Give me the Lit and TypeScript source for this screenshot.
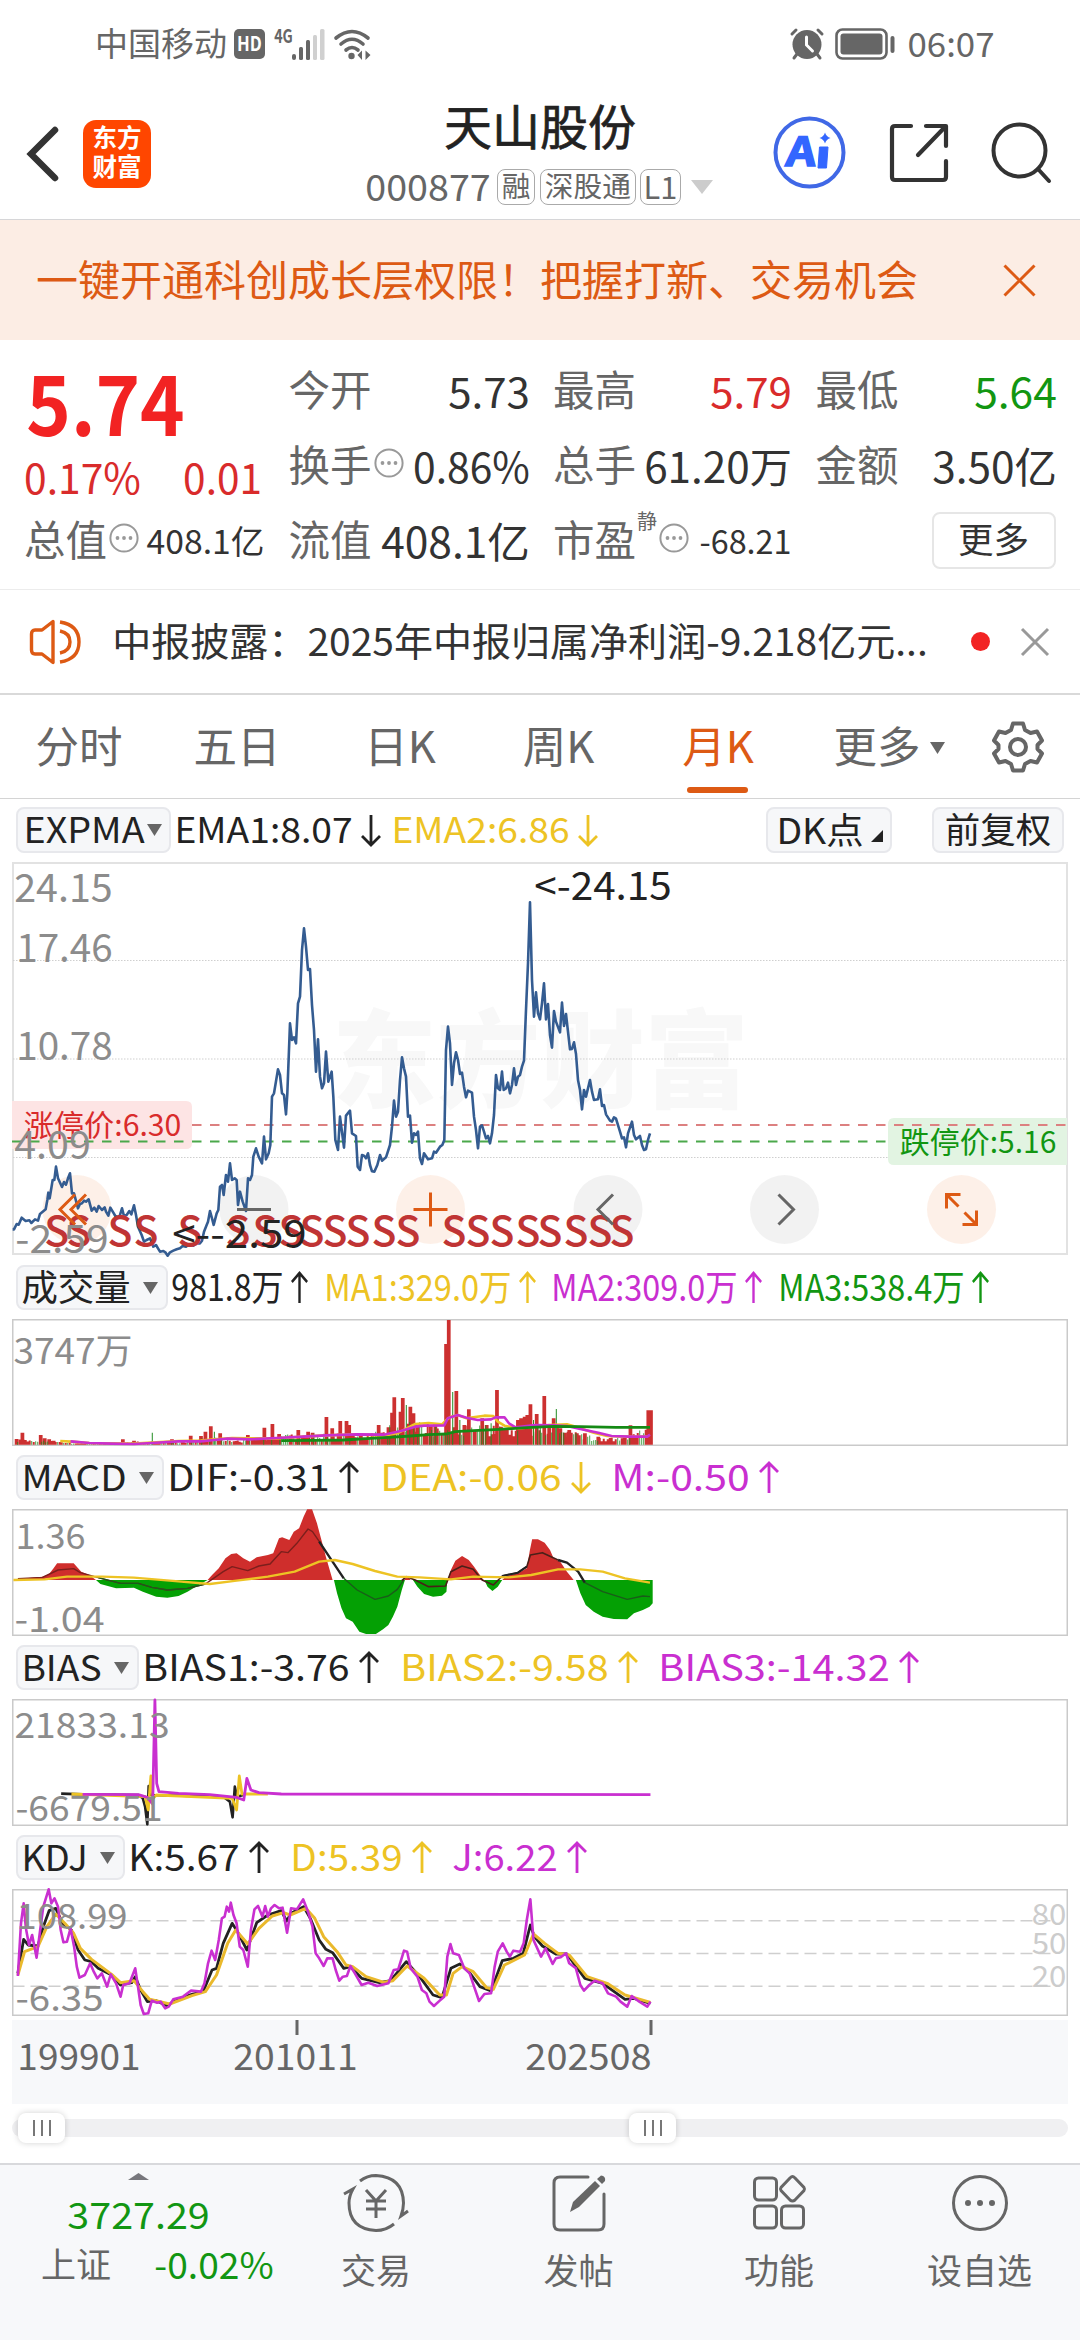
import { LitElement, html, svg, css } from "lit";
import { customElement } from "lit/decorators.js";

const INK = "#222222";
const BODY = "#333333";
const GRAY = "#666666";
const AXIS = "#8c8c8c";
const RED = "#d92b2b";
const GREEN = "#129612";
const YELLOW = "#edc324";
const PURPLE = "#c92fd0";
const ORANGE = "#dd5a14";

/** Text whose glyph run is fitted to a fixed width; the box is as tall as the digits. */
const fit = (text: string, w: number, size: number, color: string, weight = 400) => {
  const h = Math.round(size * 0.75);
  const pad = size * 0.045;
  return html`<svg class="fit" width=${w} height=${h}>
    <text x=${-pad} y=${h - 0.5} font-size=${size} fill=${color} font-weight=${weight}
      textLength=${w + pad * 2} lengthAdjust="spacingAndGlyphs">${text}</text></svg>`;
};

/** The same fitting for a label inside a chart: x is the left edge, y the baseline. */
const mark = (text: string, x: number, y: number, w: number, size: number, color = AXIS, weight = 400) => svg`
  <text x=${x - size * 0.045} y=${y} font-size=${size} fill=${color} font-weight=${weight}
    textLength=${w + size * 0.09} lengthAdjust="spacingAndGlyphs">${text}</text>`;

const line = (points: string, color: string, width = 2) => svg`
  <polyline points=${points} fill="none" stroke=${color} stroke-width=${width}
    stroke-linejoin="round" vector-effect="non-scaling-stroke"></polyline>`;

const arrow = (up: boolean, color: string) => html`<svg class="arrow" width="20" height="33" viewBox="0 0 20 33" preserveAspectRatio="none">
  <path d=${up ? "M10 32V2M1 11L10 2L19 11" : "M10 1V31M1 22L10 31L19 22"} fill="none" stroke=${color} stroke-width="2.8"></path></svg>`;

const more = html`<svg class="info" width="30" height="30" viewBox="0 0 30 30">
  <circle cx="15" cy="15" r="13.6" fill="none" stroke="#999" stroke-width="2"></circle>
  <circle cx="8.5" cy="15" r="1.9" fill="#999"></circle><circle cx="15" cy="15" r="1.9" fill="#999"></circle><circle cx="21.5" cy="15" r="1.9" fill="#999"></circle></svg>`;

const PRICE =
  "38,1138 42,1138 50,1122 56,1124 65,1103 77,1113 88,1111 94,1119 105,1108 114,1112 120,1092 137,1078 142,1050 145,1028 149,1045 158,990 163,990 168,950 174,985 186,1011 192,996 198,1004 204,985 210,970 216,1030 222,1030 234,1075 240,1062 246,1060 252,1052 258,1055 266,1048 275,1082 283,1073 290,1085 296,1068 306,1080 314,1072 318,1085 325,1097 331,1073 340,1088 346,1098 355,1102 360,1095 366,1075 372,1098 380,1095 388,1083 394,1093 402,1066 408,1095 414,1130 425,1155 432,1175 440,1170 450,1165 460,1190 468,1185 474,1195 480,1205 490,1203 497,1208 503,1217 510,1207 520,1202 530,1198 540,1195 548,1188 558,1190 566,1184 580,1187 590,1180 600,1180 606,1172 612,1145 620,1125 624,1115 630,1083 636,1105 641,1125 650,1090 655,1080 660,1010 666,1005 671,1035 678,975 684,995 690,940 696,990 704,985 710,990 714,1065 720,1025 728,1055 738,1083 744,985 750,990 756,975 760,920 768,895 776,920 786,940 792,860 798,928 806,910 811,885 816,740 822,730 834,658 840,675 846,730 852,735 858,793 862,730 870,520 876,570 882,562 888,580 894,460 900,440 906,300 912,235 918,290 924,360 930,357 936,465 942,540 948,665 954,568 960,680 966,715 972,700 978,605 985,695 995,665 1000,740 1006,870 1014,900 1020,800 1032,893 1038,797 1050,782 1056,850 1068,858 1073,950 1080,960 1086,915 1092,917 1098,925 1104,910 1110,945 1116,964 1123,965 1132,945 1140,915 1146,932 1158,922 1170,885 1176,830 1182,752 1188,800 1194,785 1200,690 1206,622 1212,655 1218,680 1224,800 1230,797 1236,878 1242,850 1248,855 1254,845 1260,925 1266,942 1272,910 1284,928 1296,925 1302,905 1308,908 1320,890 1327,885 1333,870 1338,600 1344,530 1350,580 1356,705 1362,640 1368,607 1374,630 1380,672 1386,668 1392,710 1398,742 1404,722 1416,728 1422,800 1428,840 1434,895 1440,830 1446,826 1452,845 1458,865 1464,858 1470,880 1476,850 1482,795 1488,675 1494,715 1500,720 1506,665 1511,720 1518,715 1524,698 1530,730 1536,705 1542,655 1548,705 1554,680 1560,675 1566,650 1572,632 1578,480 1584,340 1590,157 1596,390 1602,500 1608,427 1614,490 1620,508 1626,460 1632,400 1638,508 1644,462 1650,555 1656,593 1662,483 1668,515 1680,547 1686,458 1692,528 1698,492 1704,545 1710,598 1716,597 1722,577 1728,612 1734,690 1740,720 1746,778 1752,720 1758,740 1770,690 1776,725 1782,750 1794,748 1800,718 1806,768 1812,765 1818,793 1830,812 1836,815 1842,802 1848,806 1860,845 1866,865 1872,862 1878,892 1884,850 1896,815 1902,855 1908,868 1920,858 1926,885 1932,900 1938,898 1944,870 1950,850";

const SIGNALS = [45.7, 68, 109, 135, 179, 227, 254, 280, 301, 324, 347, 373, 397, 443, 467, 491, 517, 539, 565, 589, 611];

const VOLUME_PEAKS: [number, number, boolean?][] = [
  [37, 387], [50, 368], [91, 375], [100, 385], [110, 388], [120, 392], [275, 388], [300, 392], [341, 368, true], [385, 388], [427, 377], [450, 378], [460, 365], [472, 349], [480, 365, true], [493, 370], [555, 375], [592, 353], [610, 342], [625, 372], [640, 375, true], [668, 360], [690, 365], [700, 368], [731, 321], [744, 355], [762, 333], [776, 333], [782, 345], [848, 345], [870, 352], [878, 308], [883, 262], [897, 305], [902, 264], [910, 285, true], [919, 290], [926, 310], [935, 340], [965, 345], [975, 340], [999, 102], [1005, 30], [1014, 246, true], [1022, 243], [1030, 330, true], [1040, 345], [1050, 298], [1080, 325], [1090, 345], [1100, 340, true], [1113, 240], [1122, 350], [1135, 365], [1160, 330], [1167, 325], [1175, 320], [1181, 315], [1188, 283], [1195, 330, true], [1202, 312], [1210, 345, true], [1219, 258], [1230, 345], [1240, 325], [1246, 297, true], [1255, 355], [1265, 368], [1275, 360], [1290, 370, true], [1310, 370], [1340, 380], [1412, 346], [1452, 301], [1458, 301],
];
const VOLUME_BASE: [number, number][] = [
  [30, 14], [130, 10], [140, 6], [260, 3], [300, 9], [420, 9], [450, 24], [500, 22], [540, 12], [600, 22], [700, 30], [800, 34], [860, 42], [880, 56], [930, 62], [1000, 50], [1060, 56], [1130, 45], [1170, 62], [1240, 52], [1290, 30], [1350, 16], [1400, 26], [1445, 40],
];
const baseAt = (x: number) => {
  const i = Math.max(1, VOLUME_BASE.findIndex((p) => p[0] >= x));
  const [x0, h0] = VOLUME_BASE[i - 1];
  const [x1, h1] = VOLUME_BASE[i];
  return h0 + ((h1 - h0) * (x - x0)) / (x1 - x0);
};
const volumePaths = () => {
  let red = "";
  let green = "";
  let seed = 7;
  for (let x = 33; x < 1446; x += 4.48) {
    seed = (seed * 1103515245 + 12345) % 2147483648;
    const r = seed / 2147483648;
    const h = baseAt(x) * (0.45 + 0.75 * ((r * 7.3) % 1));
    if (r > 0.42) red += `M${x} 404v${-h}h4.48v${h}z`;
    else green += `M${x + 1.4} 404v${-h}h1.8v${h}z`;
  }
  for (const [x, top, down] of VOLUME_PEAKS) {
    if (down) green += `M${x - 1} 404V${top}h2.2V404z`;
    else red += `M${x - 4} 404V${top}h8.4V404z`;
  }
  return { red, green };
};

const MACD_RED =
  "M40 810L40 807L95 800L110 792L120 775L128 760H165L175 775L182 785L200 795L215 810Z M465 810L475 795L490 775L505 745L518 732L530 730L545 745L560 755L575 742L600 735L612 730L625 685L632 682L648 690L658 665L670 655L680 620L688 598H699L710 640L720 690L730 740L745 810Z M905 810L912 798L920 810Z M1003 810L1010 780L1020 752L1035 738L1050 750L1062 770L1075 795L1083 810Z M1125 810L1135 798L1160 790L1180 775L1187 720L1192 688H1205L1220 698L1232 720L1240 745L1255 755L1270 785L1285 810Z";
const MACD_GREEN =
  "M215 810L225 822L260 835L300 833L320 845L350 860L375 863L400 858L420 845L445 825L465 810Z M748 810L755 850L765 895L775 925L790 935L805 965L820 972H842L858 958L870 945L880 920L890 890L900 840L907 810Z M925 810L935 830L950 852L970 860L990 857L1000 845L1002 810Z M1085 810L1092 830L1103 843L1115 830L1125 810Z M1290 810L1300 850L1312 885L1330 905L1350 920L1375 927L1405 928L1420 910L1440 900L1455 890L1462 880V810Z";

const KDJ_J =
  "40,1008 47,850 53,790 58,865 65,915 72,885 82,953 90,870 97,800 109,748 115,790 122,775 130,800 136,870 142,907 150,905 158,865 166,920 172,980 178,1013 190,1005 202,970 210,995 218,1015 228,1000 240,1040 248,1003 260,1030 270,1070 276,1035 290,1030 303,985 308,1030 315,1095 322,1122 332,1120 340,1082 352,1088 360,1085 370,1105 378,1100 388,1078 410,1070 428,1052 450,1055 458,1030 466,970 474,932 482,960 490,900 497,835 503,830 508,800 513,815 517,788 523,825 530,850 537,920 545,930 555,980 562,870 570,808 578,798 588,830 594,798 600,830 607,805 615,795 625,805 633,803 643,878 652,805 665,808 679,778 690,815 700,860 707,940 715,955 725,978 733,955 745,955 752,990 760,1022 768,1010 777,1008 785,978 795,1000 810,1035 825,1028 845,1038 870,1030 882,990 892,988 905,932 912,935 920,985 935,1010 945,1050 955,1060 962,1085 972,1098 985,1082 995,1070 1002,950 1009,912 1015,940 1028,945 1040,985 1052,1000 1062,1040 1073,1083 1085,1062 1100,1060 1108,980 1115,935 1126,910 1135,935 1142,950 1150,932 1165,935 1173,910 1180,840 1188,778 1195,900 1212,950 1222,925 1238,972 1245,955 1256,952 1268,940 1275,970 1290,985 1300,1035 1308,1052 1320,1035 1332,1022 1350,1030 1362,1060 1380,1070 1390,1085 1405,1100 1415,1068 1432,1085 1450,1100 1457,1085";
const KDJ_K =
  "40,1000 53,898 63,915 85,918 97,860 110,812 125,805 140,850 160,870 175,930 190,960 205,965 220,985 250,1005 270,1035 295,1028 303,1010 315,1050 330,1085 350,1082 375,1098 390,1082 430,1063 455,1055 475,990 485,985 500,910 520,850 532,875 553,930 575,848 600,825 630,812 642,843 652,820 680,800 695,835 715,900 730,928 745,938 770,985 785,980 810,1015 850,1028 875,1022 910,965 940,1010 970,1065 990,1073 1010,985 1030,972 1050,995 1075,1040 1100,1053 1125,962 1150,955 1172,940 1188,855 1197,890 1215,918 1245,942 1270,942 1310,1015 1350,1030 1400,1078 1420,1075 1457,1090";
const KDJ_D =
  "40,1005 55,935 85,920 105,860 125,822 145,850 165,880 180,925 205,958 250,1003 270,1028 300,1022 320,1055 335,1078 380,1092 430,1067 460,1055 485,1005 510,910 528,870 555,912 580,865 610,828 635,818 650,825 685,805 705,835 725,890 755,935 775,975 790,980 820,1010 860,1027 880,1022 912,978 950,1015 985,1065 1000,1065 1015,1000 1035,980 1060,995 1090,1043 1105,1048 1130,975 1175,945 1195,882 1220,910 1250,940 1275,945 1315,1010 1360,1030 1400,1065 1457,1087";

type Value = [text: string, width: number, up: boolean, color: string];

@customElement("app-root")
export class AppRoot extends LitElement {
  static styles = css`
    :host { display: block; width: 1080px; height: 2340px; overflow: hidden; background: #fff; color: #333;
      font-family: "Noto Sans CJK SC", "Noto Sans", sans-serif; }
    * { box-sizing: border-box; }
    svg { display: block; flex: none; overflow: visible; }
    svg text { font-family: "Noto Sans CJK SC", "Noto Sans", sans-serif; white-space: pre; }
    .t { line-height: 1; margin-top: -0.11em; white-space: nowrap; }
    .row, .status, .header, .banner, .news, .legend, .sub { display: flex; align-items: center; }
    .grow { flex: 1; }

    .status { height: 88px; padding: 0 87px 0 95px; }
    .carrier { font-size: 33px; color: #666; margin-right: 7px; }
    .hd { width: 31px; height: 30px; border-radius: 5px; background: #666; display: flex; align-items: center; justify-content: center; margin: -1px 10px 0 0; }
    .sig { margin-right: 9px; }
    .alarm { margin-right: 11px; }
    .batt { margin-right: 14px; }

    .header { height: 132px; padding: 0 28px 0 26px; border-bottom: 1px solid #d6d6d8; position: relative; justify-content: space-between; }
    .left { display: flex; align-items: center; gap: 24px; height: 130px; }
    .logo { width: 68px; height: 68px; border-radius: 13px; background: #ff4600; color: #fff; font-weight: 700; font-size: 24.5px;
      display: flex; flex-direction: column; align-items: center; justify-content: center; gap: 5px; }
    .logo .t { margin-top: -4px; }
    .logo .t + .t { margin-top: 0; }
    .title { position: absolute; left: 0; right: 0; top: 16px; display: flex; flex-direction: column; align-items: center; gap: 20px; }
    .name { font-size: 48px; font-weight: 400; -webkit-text-stroke: 0.7px #222; color: #222; line-height: 50px; margin-top: -5px; }
    .sub { height: 36px; gap: 4.5px; }
    .tag { height: 36px; border: 1.5px solid #aaa; border-radius: 8px; display: flex; align-items: center; padding: 0 4px; font-size: 28.7px; color: #666; }
    .code { margin-right: 3px; }
    .caret { margin-left: 5px; }
    .tools { display: flex; align-items: center; gap: 43.5px; height: 130px; margin-top: -2px; }

    .banner { height: 120px; background: #fcede4; padding: 0 44px 0 36px; justify-content: space-between; font-size: 42px; color: #dd5a14; }

    .quote { height: 250px; border-bottom: 1px solid #ececec; padding: 14px 25px 0; display: grid; grid-template-columns: 238px 238px 236px 238px; column-gap: 26.5px; align-content: start; }
    .cell { height: 75px; display: flex; align-items: center; justify-content: space-between; font-size: 41.5px; color: #666; }
    .cell .row { gap: 2px; margin-left: -1px; }
    .info { margin-top: -8px; }
    .price { height: 101px; display: flex; align-items: center; padding-left: 5px; }
    .change { height: 49px; display: flex; align-items: center; justify-content: space-between; padding: 0 3px 4px 1px; }
    .sup { font-size: 20px; line-height: 1; align-self: flex-start; margin: -12px 0 0 -1px; }
    .more { width: 124px; height: 57px; border: 2px solid #e6e6e6; border-radius: 8px; display: flex; align-items: center; justify-content: center; font-size: 35.5px; color: #333; margin: -3px -1px 0 auto; }

    .news { height: 105px; border-bottom: 2px solid #d9d9d9; padding: 0 31px 0 29px; }
    .news .head { margin-left: 33px; }
    .dot { width: 19px; height: 19px; border-radius: 50%; background: #f22323; margin-right: 31px; }

    .tabs { height: 104px; border-bottom: 1px solid #d4d4d4; font-size: 43.5px; color: #666; display: grid; align-items: center; justify-items: center;
      grid-template-columns: 158px 158px 168px 149px 170px 172px 86px; }
    .tab { display: flex; flex-direction: column; align-items: center; padding-top: 2px; }
    .on { color: #dd5a14; position: relative; }
    .on::after { content: ""; position: absolute; bottom: -26px; width: 61px; height: 6px; border-radius: 3px; background: #dd5a14; }
    .pair { display: flex; align-items: center; gap: 9px; padding-top: 2px; }

    .legend { height: 63px; padding: 0 16px; }
    .legend.top { height: 62px; }
    .btn { height: 45px; border: 2px solid #e7e8ec; border-radius: 8px; background: #f6f7f9; display: flex; align-items: center; padding: 0 8px 0 5px; gap: 14px; margin-right: 5px; color: #222; }
    .top .btn { height: 46px; padding: 0 7px; gap: 4px; }
    .val { display: flex; align-items: center; gap: 11px; margin-right: 22.5px; }
    .tight .val { gap: 9px; margin-right: 17.5px; }
    .tight .arrow { width: 17px; }
    .top .val { gap: 10px; margin-right: 12px; }
    .top .flat { width: 132px; padding: 0; justify-content: center; margin: 0; font-size: 35.5px; }
    .top .dk { width: 126px; margin-right: 40px; gap: 9px; padding-left: 2px; }
    .plot { margin-left: 12px; }

    .axis { height: 84px; margin: 4px 12px 0; background: #f7f8fa; }
    .slider { height: 60px; padding: 0 12px; display: flex; align-items: center; position: relative; margin-top: -6px; }
    .track { width: 100%; height: 18px; border-radius: 9px; background: #f0f0f2; }
    .knob { position: absolute; top: 15px; width: 47px; height: 30px; border-radius: 8px; background: #fff; box-shadow: 0 0 6px rgba(0, 0, 0, 0.18);
      display: flex; align-items: center; justify-content: center; gap: 6px; }
    .knob i { width: 2px; height: 16px; background: #777; }
    .k1 { left: 18px; }
    .k2 { left: 629px; }

    .nav { height: 182px; background: #f7f8fa; border-top: 2px solid #d8d9dc; display: grid; grid-template-columns: 272px 208px 197px 204px 197px; margin-top: 5px; }
    .index { display: flex; flex-direction: column; align-items: center; padding: 8px 0 0 4px; }
    .index .fit { margin-top: 21px; }
    .index .row { gap: 45px; margin: -1px 0 0 37px; height: 73px; font-size: 35px; color: #666; align-self: flex-start; }
    .index .row .fit { margin-top: 0; }
    .item { display: flex; flex-direction: column; align-items: center; padding-top: 9px; font-size: 35px; color: #666; gap: 22px; }
    .item .t { margin: 0; margin-top: -3px; }
  `;

  private caret(w: number, h: number, color = GRAY) {
    return html`<svg width=${w} height=${h} viewBox="0 0 10 10" preserveAspectRatio="none"><path d="M0 0H10L5 10Z" fill=${color}></path></svg>`;
  }

  private values(list: Value[], size: number) {
    return list.map(([text, w, up, color]) => html`<div class="val">${fit(text, w, size, color)}${arrow(up, color)}</div>`);
  }

  private legend(name: string, w: number, list: Value[], tight = false) {
    return html`<div class="legend ${tight ? "tight" : ""}">
      <div class="btn">${fit(name, w, 36, INK)}${this.caret(15, 12)}</div>${this.values(list, 36.5)}
    </div>`;
  }

  private frame(content: unknown, offset: number, labels: unknown) {
    return html`<svg class="plot" width="1056" height="127" viewBox="0 0 1056 127">
      <rect x="0.75" y="0.75" width="1054.5" height="125.5" fill="none" stroke="#cacaca" stroke-width="1.5"></rect>
      <g transform="matrix(0.44643 0 0 0.33333 -12 ${offset})">${content}</g>${labels}
    </svg>`;
  }

  private renderStatus() {
    return html`<div class="status">
      <span class="t carrier">中国移动</span>
      <div class="hd">${fit("HD", 23, 20, "#fff", 700)}</div>
      <svg class="sig" width="50" height="31" viewBox="0 0 50 31">
        ${mark("4G", 0, 14, 17, 19, GRAY, 700)}
        <rect x="17" y="25" width="4" height="6" rx="2" fill="#666"></rect><rect x="24" y="18" width="4" height="13" rx="1.5" fill="#666"></rect>
        <rect x="31" y="11" width="4" height="20" rx="1.5" fill="#666"></rect><rect x="38" y="6" width="4" height="25" rx="1.5" fill="#d0d0d0"></rect>
        <rect x="45" y="0" width="4.5" height="31" rx="1.5" fill="#d0d0d0"></rect>
      </svg>
      <svg width="38" height="31" viewBox="0 0 38 31">
        <g fill="none" stroke="#666" stroke-width="3.6" stroke-linecap="round"><path d="M2 9Q18 -4 34 9"></path><path d="M7 15Q18 5.500 29 15"></path><path d="M12 21Q18 16 24 21"></path></g>
        <circle cx="17.500" cy="27" r="3.2" fill="#666"></circle>
        <path d="M23.500 26L28 21.500V31M28 26H23.500M36.500 26L31.500 31V21.500Z" fill="#666"></path>
      </svg>
      <div class="grow"></div>
      <svg class="alarm" width="34" height="32" viewBox="0 0 34 32">
        <circle cx="17" cy="16.500" r="14.500" fill="#666"></circle>
        <g stroke="#666" stroke-width="3" stroke-linecap="round"><path d="M2 6L6 2"></path><path d="M32 6L28 2"></path><path d="M7 26L4 30"></path><path d="M27 26L30 30"></path></g>
        <path d="M16.500 9V17L22.500 23" fill="none" stroke="#fff" stroke-width="3" stroke-linecap="round"></path>
      </svg>
      <svg class="batt" width="60" height="32" viewBox="0 0 60 32">
        <rect x="1.500" y="1.500" width="50" height="29" rx="6" fill="none" stroke="#666" stroke-width="2.600"></rect>
        <rect x="5.500" y="5.500" width="42" height="21" rx="3" fill="#666"></rect>
        <rect x="55.500" y="8" width="4" height="17" rx="2" fill="#666"></rect>
      </svg>
      ${fit("06:07", 84, 34, GRAY)}
    </div>`;
  }

  private renderHeader() {
    return html`<div class="header">
      <div class="left">
        <svg width="33" height="56" viewBox="0 0 33 56"><path d="M29 4L5 28L29 52" fill="none" stroke="#333" stroke-width="6.500" stroke-linecap="round" stroke-linejoin="miter"></path></svg>
        <div class="logo"><span class="t">东方</span><span class="t">财富</span></div>
      </div>
      <div class="title">
        <span class="name">天山股份</span>
        <div class="sub">
          <span class="code">${fit("000877", 122, 37, GRAY)}</span>
          <span class="tag"><span class="t">融</span></span>
          <span class="tag"><span class="t">深股通</span></span>
          <span class="tag">${fit("L1", 31, 31, GRAY)}</span>
          <span class="caret">${this.caret(22, 14, "#cccccc")}</span>
        </div>
      </div>
      <div class="tools">
        <svg width="73" height="73" viewBox="0 0 73 73">
          <circle cx="36.500" cy="36.500" r="34" fill="none" stroke="#4068e6" stroke-width="4"></circle>
          <g transform="skewX(-6)" stroke="#3366ff" stroke-width="1.500">${mark("A", 19, 50, 26, 40, "#3366ff", 700)}</g>
          <path d="M46.500 31h8.500l-1.500 21h-8.500z" fill="#3366ff" stroke="#3366ff" stroke-linejoin="round"></path>
          <path d="M52 16.500q1.300 4.300 5.500 5.500q-4.200 1.300-5.500 5.500q-1.300-4.200-5.500-5.500q4.200-1.200 5.500-5.500z" fill="#3366ff"></path>
        </svg>
        <svg width="58" height="58" viewBox="0 0 58 58"><g fill="none" stroke="#333" stroke-width="4.200" stroke-linecap="round" stroke-linejoin="round">
          <path d="M21 2H5Q2 2 2 5V53Q2 56 5 56H53Q56 56 56 53V37"></path><path d="M36 2H56V22"></path><path d="M55 3L28 31"></path></g></svg>
        <svg width="61" height="61" viewBox="0 0 61 61"><g fill="none" stroke="#333" stroke-width="4" stroke-linecap="round"><circle cx="28.500" cy="28.500" r="26"></circle><path d="M47 47L58 59"></path></g></svg>
      </div>
    </div>
    <div class="banner"><span class="t">一键开通科创成长层权限！把握打新、交易机会</span>
      <svg width="33" height="33" viewBox="0 0 33 33"><path d="M1.500 1.500L31.500 31.500M31.500 1.500L1.500 31.500" stroke=${ORANGE} stroke-width="3"></path></svg></div>`;
  }

  private cell(label: string, value: unknown, extra: unknown = "") {
    return html`<div class="cell"><div class="row"><span class="t">${label}</span>${extra}</div>${value}</div>`;
  }

  private renderQuote() {
    return html`<div class="quote">
      <div>
        <div class="price">${fit("5.74", 151, 83.5, "#f22323", 700)}</div>
        <div class="change">${fit("0.17%", 113, 42, RED)}${fit("0.01", 75, 42, RED)}</div>
        ${this.cell("总值", fit("408.1亿", 115, 33, BODY), more)}
      </div>
      <div>
        ${this.cell("今开", fit("5.73", 78, 42, BODY))}
        ${this.cell("换手", fit("0.86%", 113, 42, BODY), more)}
        ${this.cell("流值", fit("408.1亿", 145, 42, BODY))}
      </div>
      <div>
        ${this.cell("最高", fit("5.79", 78, 42, RED))}
        ${this.cell("总手", fit("61.20万", 144, 42, BODY))}
        ${this.cell("市盈", fit("-68.21", 89, 33, BODY), html`<span class="sup">静</span>${more}`)}
      </div>
      <div>
        ${this.cell("最低", fit("5.64", 79, 42, GREEN))}
        ${this.cell("金额", fit("3.50亿", 121, 42, BODY))}
        <div class="cell"><div class="more"><span class="t">更多</span></div></div>
      </div>
    </div>
    <div class="news">
      <svg width="52" height="46" viewBox="0 0 52 46"><g fill="none" stroke=${ORANGE} stroke-width="3.400" stroke-linejoin="round">
        <path d="M24 2.500L13 11H6Q2.500 11 2.500 15V31Q2.500 35 6 35H13L24 43.500Z"></path>
        <path d="M31 12Q41 14 41 23Q41 32 31 34"></path><path d="M31 3Q50 6 50 23Q50 40 31 43"></path></g></svg>
      <span class="head">${fit("中报披露：2025年中报归属净利润-9.218亿元...", 812, 38.5, BODY)}</span>
      <div class="grow"></div><div class="dot"></div>
      <svg width="28" height="28" viewBox="0 0 28 28"><path d="M1 1L27 27M27 1L1 27" stroke="#999" stroke-width="3"></path></svg>
    </div>`;
  }

  private renderTabs() {
    return html`<div class="tabs">
      <span class="tab"><span class="t">分时</span></span><span class="tab"><span class="t">五日</span></span>
      <span class="tab"><span class="t">日K</span></span><span class="tab"><span class="t">周K</span></span>
      <span class="tab on"><span class="t">月K</span></span>
      <div class="pair"><span class="t">更多</span>${this.caret(15, 12)}</div>
      <svg width="52" height="52" viewBox="0 0 52 52"><g fill="none" stroke="#666" stroke-width="4" stroke-linejoin="round">
        <path d="M21 2.500H31L33 9L38.500 12L45 10.500L50 19.500L45.500 24V28L50 32.500L45 41.500L38.500 40L33 43L31 49.500H21L19 43L13.500 40L7 41.500L2 32.500L6.500 28V24L2 19.500L7 10.500L13.500 12L19 9Z"></path>
        <circle cx="26" cy="26" r="8"></circle></g></svg>
    </div>
    <div class="legend top">
      <div class="btn">${fit("EXPMA", 118, 35, INK)}${this.caret(15, 12)}</div>
      ${this.values([["EMA1:8.07", 175, false, INK], ["EMA2:6.86", 175, false, YELLOW]], 35)}
      <div class="grow"></div>
      <div class="btn flat dk">${fit("DK点", 84, 36, INK)}<svg width="12" height="12"><path d="M12 6V18H0Z" fill=${INK}></path></svg></div>
      <div class="btn flat"><span class="t">前复权</span></div>
    </div>`;
  }

  private renderMain() {
    const spots: [number, string, string, string][] = [
      [65, "#fdeee6", ORANGE, "M9 -15L-6 0L9 15M-2 -15L-17 0L-2 15"],
      [242, "#f1f1f1", GRAY, "M-17 0H17"],
      [418.5, "#fdeee6", ORANGE, "M-17 0H17M0 -17V17"],
      [596, "#f1f1f1", GRAY, "M5 -15L-10 0L5 15"],
      [772.5, "#f1f1f1", GRAY, "M-6 -15L9 0L-6 15"],
      [949.5, "#fdeee6", ORANGE, "M-15 -1V-15H-1M-15 -15L-3 -3M15 1V15H1M15 15L3 3"],
    ];
    return html`<svg class="plot" width="1056" height="395" viewBox="0 0 1056 395">
      ${mark("东方财富", 325, 238, 407, 106, "#f8f8f8", 900)}
      <rect x="1" y="2" width="1054" height="391" fill="none" stroke="#e2e2e2" stroke-width="2"></rect>
      <path d="M1 99.500H1055M1 198H1055M1 296.500H1055" stroke="#cfcfcf" stroke-width="1" stroke-dasharray="1.500 1.500"></path>
      ${spots.map(([x, bg]) => svg`<circle cx=${x} cy="348.500" r="34.500" fill=${bg} opacity="0.9"></circle>`)}
      <path d="M0 240H174Q180 240 180 246V282Q180 288 174 288H0Z" fill="#fde4e4"></path>
      <path d="M1055 257H882Q876 257 876 263V298Q876 304 882 304H1055Z" fill="#e2f4e2"></path>
      <path d="M180 264H1055" stroke="#dc8080" stroke-width="2" stroke-dasharray="9.500 8.500"></path>
      <path d="M0 280.500H876" stroke="#4ba84b" stroke-width="1.800" stroke-dasharray="9.500 8.500"></path>
      ${mark("涨停价:6.30", 13, 275, 155, 30, RED)}
      ${mark("跌停价:5.16", 889, 292, 154, 30, GREEN)}
      <g transform="matrix(0.33333 0 0 0.33333 -12 -11)">${line(PRICE, "#345c91", 2.6)}</g>
      ${SIGNALS.map((x) => svg`<text x=${x - 13.5} y="384.500" font-size="41" font-weight="500" fill="#c03434">S</text>`)}
      ${mark("24.15", 4, 41, 95, 39)}${mark("17.46", 6, 101, 93, 39)}${mark("10.78", 6, 199, 93, 39)}
      ${mark("4.09", 4, 298, 73, 39)}${mark("-2.59", 5, 392, 90, 39)}
      ${mark("<-24.15", 524, 39, 134, 39, INK)}${mark("<--2.59", 162, 387, 131, 39, INK)}
      ${spots.map(([x, , color, d]) => svg`<path transform="translate(${x} 348.500)" d=${d} fill="none" stroke=${color} stroke-width="3"></path>`)}
    </svg>`;
  }

  private renderIndicators() {
    const { red, green } = volumePaths();
    return html`
      ${this.legend("成交量", 106, [["981.8万", 109, true, INK], ["MA1:329.0万", 184, true, YELLOW], ["MA2:309.0万", 183, true, PURPLE], ["MA3:538.4万", 183, true, GREEN]], true)}
      ${this.frame(
        svg`<path d=${red} fill="#cc3030"></path><path d=${green} fill="#1f8a1f"></path>
        ${line("135,393 160,395 200,399 300,401 400,393 450,392 480,388 520,384 560,385 620,385 680,380 730,376 800,373 860,377 890,370 930,342 960,339 990,343 1000,330 1010,320 1025,315 1045,325 1060,322 1085,317 1105,318 1115,335 1130,347 1160,355 1200,350 1230,345 1270,343 1290,350 1330,368 1360,378 1400,380 1450,380", YELLOW, 2.6)}
        ${line("158,394 200,399 250,401 300,402 340,399 400,394 450,394 480,390 510,386 560,388 620,384 680,380 730,376 800,373 860,374 900,362 930,350 950,347 995,346 1003,325 1025,315 1045,323 1070,330 1100,328 1110,322 1130,322 1140,340 1155,352 1200,345 1240,346 1270,348 1300,357 1340,368 1370,378 1410,380 1450,380 1456,374", PURPLE, 2.6)}
        ${line("630,392 700,391 770,390 830,385 870,382 920,378 960,374 1000,372 1020,365 1060,362 1120,358 1180,353 1240,349 1300,350 1380,352 1456,352", "#158a15", 2.8)}`,
        -9,
        mark("3747万", 3, 45, 116, 35),
      )}
      ${this.legend("MACD", 102, [["DIF:-0.31", 159, true, INK], ["DEA:-0.06", 178, false, YELLOW], ["M:-0.50", 135, true, PURPLE]])}
      ${this.frame(
        svg`<path d=${MACD_RED} fill="#cf2e2c"></path><path d=${MACD_GREEN} fill="#04a004"></path>
        ${line("40,806 95,802 130,780 165,776 180,788 220,803 270,820 310,820 340,832 375,840 420,835 460,822 475,808 500,785 520,770 555,782 580,768 605,762 630,725 645,728 665,700 690,657 700,665 718,700", "#7c1f1c", 1.4)}
        ${line("220,803 270,820 310,820 340,832 375,840 420,835 460,822", "#1a5c1a", 1.4)}
        ${line("715,695 740,745 770,805", INK, 2.4)}
        ${line("770,805 800,840 840,868 870,858 890,838 905,808", "#1a5c1a", 1.4)}
        ${line("900,812 910,800 930,810 960,830 998,828 1010,785 1035,768 1060,778 1080,810 1105,825 1125,798 1160,788 1180,770 1188,735 1215,728 1250,750", "#4a2018", 1.6)}
        ${line("1125,798 1160,788 1180,770", INK, 2)}${line("1250,750 1270,758 1295,785 1310,818", INK, 2.4)}
        ${line("1310,818 1350,845 1405,868 1440,858 1456,860", "#1a5c1a", 1.4)}
        ${line("30,810 100,808 150,800 230,800 300,803 380,812 470,822 530,812 600,800 660,785 715,755 750,750 790,762 840,783 890,800 940,802 1010,808 1060,800 1140,802 1190,795 1250,778 1300,778 1350,785 1400,805 1456,818", YELLOW, 2.4)}`,
        -199,
        [mark("1.36", 5, 40, 67, 35), mark("-1.04", 4, 123, 87, 35)],
      )}
      ${this.legend("BIAS", 77, [["BIAS1:-3.76", 204, true, INK], ["BIAS2:-9.58", 205, true, YELLOW], ["BIAS3:-14.32", 228, true, PURPLE]])}
      ${this.frame(
        svg`${line("137,461 185,463 310,465 320,475 325,500 330,553 333,438 338,465 500,470 515,485 521,532 526,440 531,470 545,465", INK, 2.6)}
        ${line("160,462 325,470 332,510 338,408 343,475 350,465 520,475 530,510 536,408 542,462 600,462", YELLOW, 2.8)}
        ${line("185,463 310,464 330,472 342,492 347,180 351,430 356,455 400,460 470,464 530,472 546,480 553,415 562,450 580,458 630,462 1457,464", PURPLE, 2.8)}`,
        -59,
        [mark("21833.13", 4, 39, 152, 35), mark("-6679.51", 5, 122, 144, 35)],
      )}
      ${this.legend("KDJ", 63, [["K:5.67", 108, true, INK], ["D:5.39", 109, true, YELLOW], ["J:6.22", 102, true, PURPLE]])}
      ${this.frame(
        svg`<path d="M28 842H2364M28 940.500H2364M28 1039H2364" stroke="#cfcfcf" stroke-width="1.500" stroke-dasharray="12 6" vector-effect="non-scaling-stroke"></path>
        ${line(KDJ_K, INK, 2.8)}${line(KDJ_D, "#eab92c", 3)}${line(KDJ_J, PURPLE, 2.6)}`,
        -249,
        [mark("108.99", 6, 40, 108, 35), mark("-6.35", 5, 122, 85, 35), mark("80", 1021, 36, 32, 29, "#cccccc"), mark("50", 1021, 65, 32, 29, "#cccccc"), mark("20", 1021, 98, 32, 29, "#cccccc")],
      )}
      <div class="axis"><svg width="1056" height="84"><path d="M285 0V15M639 0V15" stroke="#666" stroke-width="3"></path>
        ${mark("199901", 7, 50, 120, 36, GRAY)}${mark("201011", 223, 50, 121, 36, GRAY)}${mark("202508", 515, 50, 123, 36, GRAY)}</svg></div>
      <div class="slider"><div class="track"></div><div class="knob k1"><i></i><i></i><i></i></div><div class="knob k2"><i></i><i></i><i></i></div></div>`;
  }

  private renderNav() {
    return html`<div class="nav">
      <div class="index">
        <svg width="21" height="7"><path d="M0 7L10.500 0L21 7Z" fill="#77777c"></path></svg>
        ${fit("3727.29", 139, 37, GREEN)}
        <div class="row"><span class="t">上证</span>${fit("-0.02%", 116, 37, GREEN)}</div>
      </div>
      <div class="item"><svg width="66" height="58" viewBox="0 0 66 58"><g fill="none" stroke="#666" stroke-width="3">
        <path d="M17 7Q24 1.500 33 1.500Q60 3 60.500 29Q60.500 35 58 42L65 37"></path>
        <path d="M51 50Q43 56.500 33 56.500Q6 55 6 29Q6 22 10 15L1 20"></path>
        <path d="M23 16L33 27L43 16M33 27V44M23 27H43M23 35H43"></path></g></svg><span class="t">交易</span></div>
      <div class="item"><svg width="54" height="58" viewBox="0 0 54 58"><g fill="none" stroke="#666" stroke-width="3" stroke-linecap="round">
        <path d="M36 3H8Q2 3 2 9V50Q2 56 8 56H46Q52 56 52 50V20"></path></g>
        <path d="M18 38L21 28L43 7L48 12L27 33Z" fill="#666"></path><path d="M45 5L49 1.500Q54 2 53 7L50 10Z" fill="#666"></path></svg><span class="t">发帖</span></div>
      <div class="item"><svg width="54" height="58" viewBox="0 0 54 58"><g fill="none" stroke="#666" stroke-width="3">
        <rect x="2.500" y="4" width="22" height="22" rx="4"></rect><rect x="2.500" y="32" width="22" height="22" rx="4"></rect><rect x="29.500" y="32" width="22" height="22" rx="4"></rect>
        <path d="M40.500 2.500Q41.500 2.500 43 4L52 13.500Q53 15 52 16.500L43 26Q40.500 28 38 26L29 16.500Q28 15 29 13.500L38 4Q39.500 2.500 40.500 2.500Z"></path></g></svg><span class="t">功能</span></div>
      <div class="item"><svg width="58" height="58" viewBox="0 0 58 58"><circle cx="29" cy="29" r="26.500" fill="none" stroke="#666" stroke-width="3"></circle>
        <g fill="#666"><circle cx="17" cy="29" r="3"></circle><circle cx="29" cy="29" r="3"></circle><circle cx="41" cy="29" r="3"></circle></g></svg><span class="t">设自选</span></div>
    </div>`;
  }

  render() {
    return html`${this.renderStatus()}${this.renderHeader()}${this.renderQuote()}${this.renderTabs()}${this.renderMain()}${this.renderIndicators()}${this.renderNav()}`;
  }
}
